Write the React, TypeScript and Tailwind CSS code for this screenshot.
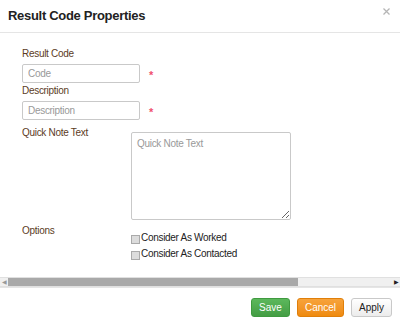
import React from 'react';

const font = { fontFamily: '"Liberation Sans", Arial, sans-serif' };

export default function App() {
  return (
    <div className="w-[400px] h-[321px] bg-white flex flex-col overflow-hidden" style={font}>
      {/* Header */}
      <div className="h-[33px] flex items-start justify-between pl-[8px] pr-[10px] border-b border-[#e5e5e5]">
        <h1 className="mt-[8px] text-[13px] leading-[16px] font-bold text-[#222] tracking-[-0.3px]">Result Code Properties</h1>
        <svg className="mt-[8px]" width="7" height="7" viewBox="0 0 7 7">
          <path d="M0.5 0.5L6.5 6.5M6.5 0.5L0.5 6.5" stroke="#b5b5b5" strokeWidth="1.3" />
        </svg>
      </div>

      {/* Body */}
      <div className="flex-1 flex flex-col pl-[22px] pt-[14px] text-[10px] tracking-[-0.3px]">
        <label className="text-[#5c3b1e] leading-[13px]">Result Code</label>
        <div className="flex items-center mt-[4px] h-[19px]">
          <input
            placeholder="Code"
            className="w-[118px] h-[19px] border border-[#c9c9c9] rounded-[2px] px-[5px] text-[10px] placeholder:text-[#999] outline-none"
          />
          <span className="ml-[9px] mt-[3px] text-[#f0506e] text-[11px] font-bold leading-none">*</span>
        </div>

        <label className="text-[#5c3b1e] leading-[13px] mt-[1px]">Description</label>
        <div className="flex items-center mt-[4px] h-[19px]">
          <input
            placeholder="Description"
            className="w-[118px] h-[19px] border border-[#c9c9c9] rounded-[2px] px-[5px] text-[10px] placeholder:text-[#999] outline-none"
          />
          <span className="ml-[9px] mt-[3px] text-[#f0506e] text-[11px] font-bold leading-none">*</span>
        </div>

        <div className="flex mt-[6px]">
          <label className="w-[109px] text-[#5c3b1e] leading-[13px]">Quick Note Text</label>
          <textarea
            placeholder="Quick Note Text"
            className="w-[160px] h-[88px] mt-[6px] border border-[#c9c9c9] rounded-[2px] px-[5px] py-[3px] text-[10px] placeholder:text-[#999] outline-none"
          />
        </div>

        <div className="flex mt-[4px]">
          <label className="w-[109px] text-[#5c3b1e] leading-[13px]">Options</label>
          <div className="flex flex-col mt-[8px] gap-[4px]">
            <label className="flex items-center gap-[1px] text-[#222] leading-[12px]">
              <span className="w-[9px] h-[9px] border border-[#aaa] bg-[#dcdcdc] mt-[2px]" />
              Consider As Worked
            </label>
            <label className="flex items-center gap-[1px] text-[#222] leading-[12px]">
              <span className="w-[9px] h-[9px] border border-[#aaa] bg-[#dcdcdc] mt-[2px]" />
              Consider As Contacted
            </label>
          </div>
        </div>
      </div>

      {/* Horizontal scrollbar */}
      <div className="h-[10px] flex items-center bg-[#f0f0f0] border-y border-[#e0e0e0]">
        <span className="w-[8px] text-[6px] text-[#999] text-center leading-none">◀</span>
        <div className="flex-1 h-[8px] flex">
          <div className="w-[290px] h-full bg-[#a9a9a9]" />
        </div>
        <span className="w-[8px] text-[6px] text-[#222] text-center leading-none">▶</span>
      </div>

      {/* Footer */}
      <div className="h-[34px] border-t border-[#e5e5e5] flex items-center justify-end gap-[7px] pr-[8px] pt-[5px] text-[10px]">
        <button className="w-[39px] h-[19px] rounded-[3px] bg-gradient-to-b from-[#5cb85c] to-[#449d44] border border-[#3f9a3f] text-white">Save</button>
        <button className="w-[47px] h-[19px] rounded-[3px] bg-gradient-to-b from-[#f7a33a] to-[#ef8a0c] border border-[#e07f0a] text-white">Cancel</button>
        <button className="w-[41px] h-[19px] rounded-[3px] bg-gradient-to-b from-white to-[#ececec] border border-[#c9c9c9] text-[#222]">Apply</button>
      </div>
    </div>
  );
}
